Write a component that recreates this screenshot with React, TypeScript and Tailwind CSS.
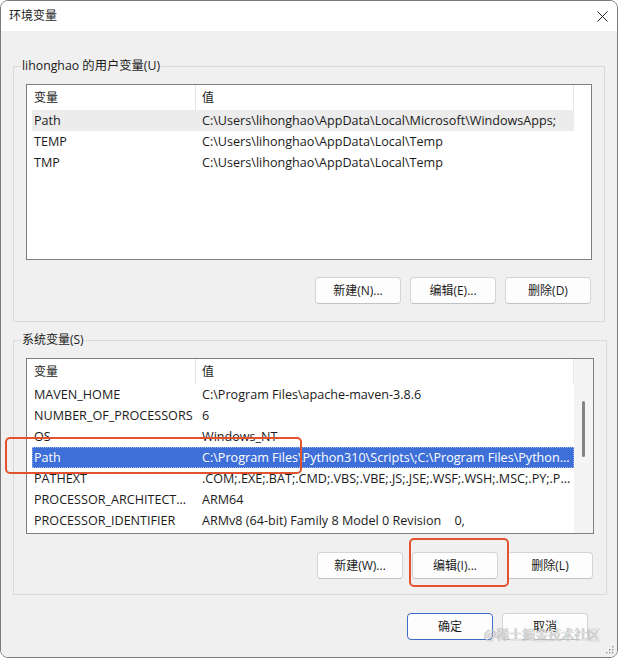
import React from 'react';

type EnvVar = { name: string; value: string };

const userVars: EnvVar[] = [
  { name: 'Path', value: 'C:\\Users\\lihonghao\\AppData\\Local\\Microsoft\\WindowsApps;' },
  { name: 'TEMP', value: 'C:\\Users\\lihonghao\\AppData\\Local\\Temp' },
  { name: 'TMP', value: 'C:\\Users\\lihonghao\\AppData\\Local\\Temp' },
];

const systemVars: EnvVar[] = [
  { name: 'MAVEN_HOME', value: 'C:\\Program Files\\apache-maven-3.8.6' },
  { name: 'NUMBER_OF_PROCESSORS', value: '6' },
  { name: 'OS', value: 'Windows_NT' },
  { name: 'Path', value: 'C:\\Program Files\\Python310\\Scripts\\;C:\\Program Files\\Python...' },
  { name: 'PATHEXT', value: '.COM;.EXE;.BAT;.CMD;.VBS;.VBE;.JS;.JSE;.WSF;.WSH;.MSC;.PY;.P...' },
  { name: 'PROCESSOR_ARCHITECT...', value: 'ARM64' },
  { name: 'PROCESSOR_IDENTIFIER', value: 'ARMv8 (64-bit) Family 8 Model 0 Revision    0,' },
];

const WinButton = ({ label, primary }: { label: string; primary?: boolean }) => (
  <button
    className={`w-[86px] h-[27px] rounded-[4px] border bg-[#fdfdfd] text-[12px] text-[#1b1b1b] leading-none ${
      primary ? 'border-[#3d6bc9]' : 'border-[#d4d4d4] border-b-[#c2c2c2]'
    }`}
  >
    {label}
  </button>
);

const VarList = ({
  rows,
  hoverIndex,
  selectedIndex,
  scroll,
}: {
  rows: EnvVar[];
  hoverIndex?: number;
  selectedIndex?: number;
  scroll?: boolean;
}) => (
  <div className="mt-[10px] h-[176px] border border-[#7f7f7f] bg-white flex">
    <div className="w-[547px] flex flex-col">
      <div className="h-[25px] flex text-[12px] leading-[25px] text-[#1b1b1b]">
        <div className="w-[169px] pl-[7px] border-r border-[#e6e6e6]">变量</div>
        <div className="w-[378px] pl-[6px] border-r border-[#e6e6e6]">值</div>
      </div>
      {rows.map((r, i) => {
        const selected = i === selectedIndex;
        const hover = i === hoverIndex;
        return (
          <div
            key={r.name + i}
            className={`ml-[5px] w-[542px] h-[21px] flex text-[12.6px] leading-[19px] whitespace-pre overflow-hidden border ${
              selected
                ? 'bg-[#3e6fd8] text-white border-dotted border-[#9db4ea]'
                : hover
                ? 'bg-[#ececec] text-[#1b1b1b] border-transparent'
                : 'text-[#1b1b1b] border-transparent'
            }`}
          >
            <div className="w-[170px] pl-[1px]">{r.name}</div>
            <div className="flex-1 -ml-[1px]">{r.value}</div>
          </div>
        );
      })}
    </div>
    {scroll && (
      <div className="w-[19px] bg-[#f4f4f4] flex flex-col pt-[42px]">
        <div className="mx-auto w-[3px] h-[56px] rounded-full bg-[#858585]" />
      </div>
    )}
  </div>
);

export default function App() {
  return (
    <div className="w-[618px] h-[659px] bg-white font-['Open_Sans','Noto_Sans_CJK_SC',sans-serif] text-[#1b1b1b]">
      <div className="relative w-[618px] h-[658px] rounded-[8px] border border-[#7a7a7a] overflow-hidden flex flex-col">
        {/* title bar */}
        <div className="h-[30px] bg-white flex items-center justify-between pl-[8px] pr-[9px]">
          <span className="text-[12px]">环境变量</span>
          <svg width="11" height="11" viewBox="0 0 11 11" className="text-[#1b1b1b]">
            <path d="M0.5 0.5 L10.5 10.5 M10.5 0.5 L0.5 10.5" stroke="currentColor" strokeWidth="1" />
          </svg>
        </div>

        <div className="flex-1 bg-[#f0f0f0] pl-[12px] pt-[27px] flex flex-col">
          <fieldset className="w-[592px] border border-[#dadada] p-0">
            <legend className="ml-[7px] px-[1px] text-[12.3px] leading-[16px]">lihonghao 的用户变量(U)</legend>
            <div className="px-[12px] pb-[17px]">
              <VarList rows={userVars} hoverIndex={0} />
              <div className="mt-[17px] flex justify-end gap-[9px] pr-[1px]">
                <WinButton label="新建(N)..." />
                <WinButton label="编辑(E)..." />
                <WinButton label="删除(D)" />
              </div>
            </div>
          </fieldset>

          <fieldset className="mt-[10px] w-[592px] border border-[#dadada] p-0">
            <legend className="ml-[7px] px-[1px] text-[12px] leading-[16px]">系统变量(S)</legend>
            <div className="px-[12px] pb-[15px]">
              <VarList rows={systemVars} selectedIndex={3} scroll />
              <div className="mt-[18px] flex justify-end gap-[9px] pr-[1px]">
                <WinButton label="新建(W)..." />
                <WinButton label="编辑(I)..." />
                <WinButton label="删除(L)" />
              </div>
            </div>
          </fieldset>

          <div className="mt-[18px] w-[575px] flex justify-end gap-[9px]">
            <WinButton label="确定" primary />
            <WinButton label="取消" />
          </div>
        </div>

        {/* resize grip */}
        <svg width="9" height="9" viewBox="0 0 9 9" className="absolute right-[3px] bottom-[3px]">
          <g fill="#9a9a9a">
            <rect x="7" y="1" width="1.5" height="1.5" />
            <rect x="4" y="4" width="1.5" height="1.5" />
            <rect x="7" y="4" width="1.5" height="1.5" />
            <rect x="1" y="7" width="1.5" height="1.5" />
            <rect x="4" y="7" width="1.5" height="1.5" />
            <rect x="7" y="7" width="1.5" height="1.5" />
          </g>
        </svg>

        {/* red annotation boxes */}
        <div className="absolute left-[4px] top-[436px] w-[297px] h-[37px] rounded-[5px] border-2 border-[#e2532d]" />
        <div className="absolute left-[408px] top-[537px] w-[100px] h-[49px] rounded-[5px] border-2 border-[#e2532d]" />

        {/* watermark */}
        <div className="absolute left-[483px] top-[624px] text-[13px] leading-[18px] whitespace-nowrap text-[#e2e2e2] [text-shadow:0_0_1px_#6f6f6f] font-['Noto_Sans_CJK_SC',sans-serif]">
          @稀土掘金技术社区
        </div>
      </div>
    </div>
  );
}
